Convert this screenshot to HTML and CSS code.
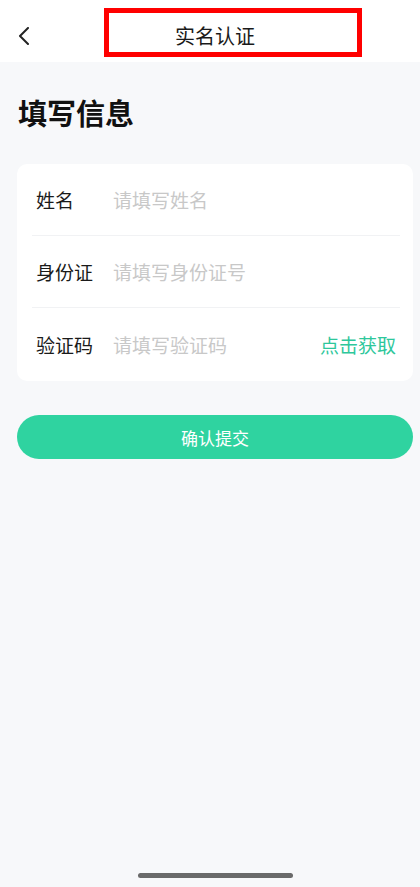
FILE: index.html
```html
<!DOCTYPE html>
<html lang="zh-CN">
<head>
<meta charset="utf-8">
<meta name="viewport" content="width=device-width, initial-scale=1">
<title>实名认证</title>
<link rel="stylesheet" href="styles.css">
</head>
<body>
<div class="screen">
  <header class="navbar">
    <button class="back" aria-label="返回">
      <svg width="14" height="18" viewBox="0 0 14 18"><path d="M11 1 L3 9 L11 17" fill="none" stroke="#222" stroke-width="2" stroke-linecap="round" stroke-linejoin="round"/></svg>
    </button>
    <h1 class="nav-title">实名认证</h1>
    <div class="highlight"></div>
  </header>
  <main class="content">
    <h2 class="section-title">填写信息</h2>
    <div class="card">
      <div class="row">
        <span class="label">姓名</span>
        <span class="placeholder">请填写姓名</span>
      </div>
      <div class="row">
        <span class="label">身份证</span>
        <span class="placeholder">请填写身份证号</span>
      </div>
      <div class="row">
        <span class="label">验证码</span>
        <span class="placeholder">请填写验证码</span>
        <span class="get-code">点击获取</span>
      </div>
    </div>
    <button class="submit">确认提交</button>
  </main>
  <div class="home-bar"></div>
</div>
</body>
</html>
```
FILE: styles.css
```css
* { box-sizing: border-box; }
html, body { margin: 0; padding: 0; }
body {
  font-family: "Noto Sans CJK SC", "Noto Sans", sans-serif;
  background: #f7f8fa;
  color: #1a1a1a;
}
.screen {
  width: 420px;
  height: 887px;
  display: flex;
  flex-direction: column;
  position: relative;
  background: #f7f8fa;
}
.navbar {
  position: relative;
  height: 62px;
  background: #ffffff;
  display: flex;
  align-items: center;
  padding: 9px 7px 0 17px;
}
.back {
  border: 0;
  background: none;
  padding: 0;
  width: 14px;
  height: 18px;
  display: flex;
  margin-top: 1px;
}
.nav-title {
  flex: 1;
  margin: 0 14px 0 0;
  text-align: center;
  font-size: 20px;
  font-weight: 400;
  line-height: 28px;
  color: #1a1a1a;
}
.highlight {
  position: absolute;
  left: 104px;
  top: 8px;
  width: 258px;
  height: 49px;
  border: 5px solid #ff0000;
}
.content {
  flex: 1;
  padding: 0 7px 0 17px;
  display: flex;
  flex-direction: column;
}
.section-title {
  margin: 30px 0 0 1px;
  font-size: 29px;
  font-weight: 700;
  line-height: 40px;
  color: #111;
}
.card {
  margin-top: 32px;
  background: #ffffff;
  border-radius: 10px;
  padding: 0 13px 0 15px;
}
.row {
  height: 72px;
  display: flex;
  align-items: center;
  padding: 0 4px;
  border-bottom: 1px solid #f1f2f4;
  font-size: 19px;
}
.row:last-child { border-bottom: 0; height: 73px; }
.label {
  width: 77px;
  flex: none;
  color: #1a1a1a;
}
.placeholder {
  flex: 1;
  color: #c8c8c8;
}
.get-code {
  color: #2ec79b;
}
.submit {
  margin-top: 34px;
  height: 44px;
  border: 0;
  border-radius: 22px;
  background: #2fd3a0;
  color: #ffffff;
  font-family: inherit;
  font-size: 17px;
}
.home-bar {
  position: absolute;
  left: 138px;
  top: 873px;
  width: 155px;
  height: 5px;
  border-radius: 3px;
  background: #6a6a6a;
}
```
